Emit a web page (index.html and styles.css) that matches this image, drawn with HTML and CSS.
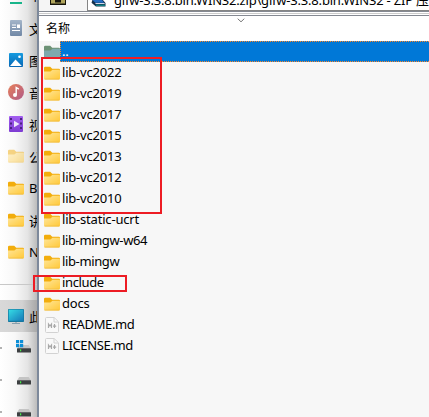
FILE: index.html
```
<!DOCTYPE html>
<html lang="zh-CN">
<head>
<meta charset="utf-8">
<title>Archive</title>
<link rel="stylesheet" href="styles.css">
</head>
<body>
<svg width="0" height="0" class="defs">
  <defs>
    <linearGradient id="gf" x1="0" y1="0" x2="1" y2="1"><stop offset="0" stop-color="#ffe69a"/><stop offset="1" stop-color="#ffc837"/></linearGradient>
    <linearGradient id="gm" x1="0" y1="0" x2="1" y2="1"><stop offset="0" stop-color="#35dce5"/><stop offset="1" stop-color="#1678b8"/></linearGradient>
    <linearGradient id="gp" x1="0" y1="0" x2="0" y2="1"><stop offset="0" stop-color="#159be0"/><stop offset="1" stop-color="#0867b4"/></linearGradient>
    <linearGradient id="ga" x1="0" y1="0" x2="1" y2="1"><stop offset="0" stop-color="#e7805a"/><stop offset="1" stop-color="#b05a88"/></linearGradient>
    <linearGradient id="gd" x1="0" y1="0" x2="0" y2="1"><stop offset="0" stop-color="#a4b5c9"/><stop offset="1" stop-color="#7188a6"/></linearGradient>
    <linearGradient id="gv" x1="0" y1="0" x2="0" y2="1"><stop offset="0" stop-color="#a35ff0"/><stop offset="1" stop-color="#7d3bd2"/></linearGradient>
    <symbol id="folder" viewBox="0 0 16 14"><path d="M0 2Q0 .8 1.2 .8H6.2L8.2 2.8H14.8Q16 2.8 16 4V8H0Z" fill="#f2ad0c"/><path d="M0 5.4H6.4L8.5 3.7H15Q16 3.7 16 4.7V12.3Q16 13.5 14.8 13.5H1.2Q0 13.5 0 12.3Z" fill="url(#gf)"/><path d="M.5 13.1H15.4" stroke="#edb83c" stroke-width=".7"/></symbol>
    <symbol id="folder-sel" viewBox="0 0 16 14"><path d="M0 2Q0 .8 1.2 .8H6.2L8.2 2.8H14.8Q16 2.8 16 4V8H0Z" fill="#6d9275"/><path d="M0 5.4H6.4L8.5 3.7H16V13.5H0Z" fill="#7eaaae"/></symbol>
    <symbol id="md" viewBox="0 0 14 16"><path d="M.5 1.5Q.5.5 1.5.5H9.2L13.5 4.8V14.5Q13.5 15.5 12.5 15.5H1.5Q.5 15.5.5 14.5Z" fill="#f9f9f9" stroke="#d2d2d2"/><path d="M9 .8V5H13.2" fill="none" stroke="#d2d2d2"/><path d="M3.5 11V7L5 9L6.5 7V11M9.5 7V11M8 9.2H11.2" fill="none" stroke="#a8a8a8" stroke-width="1.2"/></symbol>
    <symbol id="drive" viewBox="0 0 14 8"><path d="M2.3 0H11.7L14 3.5H0Z" fill="#c4c4c4"/><rect y="3.2" width="14" height="4.3" rx=".5" fill="#3c3f41"/><rect x="3" y="4.3" width="1.2" height="2" fill="#45ed4b"/></symbol>
  </defs>
</svg>
<div class="app">
  <aside class="side">
    <div class="nav"><svg class="i14" viewBox="0 0 14 16"><path d="M7 0V9M3 5L7 9L11 5" fill="none" stroke="#22b88c" stroke-width="2"/><rect x="1" y="14" width="12" height="2" fill="#18b58a"/></svg><span>下载</span></div>
    <div class="nav"><svg class="i14" viewBox="0 0 14 16"><rect x="1" width="12" height="16" rx="1" fill="url(#gd)"/><path d="M3 5H7M3 7.5H7M3 10.5H11" stroke="#fff" stroke-width="1.2"/><rect x="8" y="4.5" width="3" height="3.5" fill="#fff"/></svg><span>文档</span></div>
    <div class="nav"><svg class="i14" viewBox="0 0 14 14"><rect width="14" height="14" rx="1" fill="url(#gp)"/><path d="M1 13L6.5 6.5L12.8 13Z" fill="#fff"/><circle cx="10.5" cy="3.7" r="1.3" fill="#fff"/></svg><span>图片</span></div>
    <div class="nav"><svg class="i16" viewBox="0 0 16 16"><circle cx="8" cy="8" r="8" fill="url(#ga)"/><path d="M8.2 10.8V3.5L10.8 5.2" fill="none" stroke="#fff" stroke-width="1.4"/><circle cx="7" cy="11" r="2" fill="#fff"/></svg><span>音乐</span></div>
    <div class="nav"><svg class="i14" viewBox="0 0 14 16"><rect width="14" height="16" rx="1" fill="url(#gv)"/><path d="M2 2V15M12 2V15" stroke="#4b2380" stroke-width="2" stroke-dasharray="2 2.5"/><path d="M5 4.8L10.5 8L5 11.2Z" fill="#eee7fa"/></svg><span>视频</span></div>
    <div class="nav faded"><svg class="i16"><use href="#folder"/></svg><span>公用</span></div>
    <div class="nav"><svg class="i16"><use href="#folder"/></svg><span>BIN</span></div>
    <div class="nav"><svg class="i16"><use href="#folder"/></svg><span>讲义</span></div>
    <div class="nav"><svg class="i16"><use href="#folder"/></svg><span>Note</span></div>
    <div class="gap"></div>
    <div class="nav here"><svg class="i16" viewBox="0 0 16 16"><rect width="16" height="13" y="1" rx=".7" fill="#16779e"/><rect x=".7" y="1.6" width="14.6" height="11.2" fill="url(#gm)"/><path d="M8 14V15.5M4 15.5H12" stroke="#8aa0ad" stroke-width="1.2"/></svg><span>此电脑</span></div>
    <div class="nav disk"><i class="chev"></i><svg class="idisk" viewBox="0 0 15 14"><use href="#drive" x="1" y="5" width="14" height="8"/><path d="M0 0H3.2V3.2H0ZM4 0H7.2V3.2H4ZM0 4H3.2V7.2H0ZM4 4H7.2V7.2H4Z" fill="#0c8ed7"/></svg></div>
    <div class="nav disk"><i class="chev"></i><svg class="idisk" viewBox="0 0 15 14"><use href="#drive" x="1" y="5" width="14" height="8"/></svg></div>
    <div class="nav disk"><i class="chev"></i><svg class="idisk" viewBox="0 0 15 14"><use href="#drive" x="1" y="5" width="14" height="8"/></svg></div>
  </aside>
  <main class="main">
    <div class="bar">
      <i class="grip g1"></i>
      <svg class="up" viewBox="0 0 16 5"><path d="M0 0H16V5H0Z" fill="#16140a"/><path d="M1 0H15V3.5H1Z" fill="#b0a55c"/><path d="M5 0H11V2.5H5Z" fill="#16140a"/></svg>
      <i class="grip g2"></i>
      <div class="path">
        <svg class="books" viewBox="0 0 18 8"><path d="M2 0H14L17 3.5V7.5H6L1 3Z" fill="#15304b"/><path d="M2 0H13L15.5 3H5.5Z" fill="#236bc1"/><path d="M5.5 4H16" stroke="#eef" stroke-width="1"/><path d="M6 6H16.5" stroke="#108887" stroke-width="1.5"/></svg>
        <span class="addr">glfw-3.3.8.bin.WIN32.zip\glfw-3.3.8.bin.WIN32 - ZIP 压缩文件</span>
      </div>
    </div>
    <div class="rule"></div>
    <div class="head"><span>名称</span><svg class="sort" viewBox="0 0 8 5"><path d="M.7.7L4 3.8L7.3.7" fill="none" stroke="#777"/></svg></div>
    <div class="list">
      <div class="row sel"><svg class="i16"><use href="#folder-sel"/></svg><span>..</span></div>
      <div class="row"><svg class="i16"><use href="#folder"/></svg><span>lib-vc2022</span></div>
      <div class="row"><svg class="i16"><use href="#folder"/></svg><span>lib-vc2019</span></div>
      <div class="row"><svg class="i16"><use href="#folder"/></svg><span>lib-vc2017</span></div>
      <div class="row"><svg class="i16"><use href="#folder"/></svg><span>lib-vc2015</span></div>
      <div class="row"><svg class="i16"><use href="#folder"/></svg><span>lib-vc2013</span></div>
      <div class="row"><svg class="i16"><use href="#folder"/></svg><span>lib-vc2012</span></div>
      <div class="row"><svg class="i16"><use href="#folder"/></svg><span>lib-vc2010</span></div>
      <div class="row"><svg class="i16"><use href="#folder"/></svg><span>lib-static-ucrt</span></div>
      <div class="row tight"><svg class="i16"><use href="#folder"/></svg><span>lib-mingw-w64</span></div>
      <div class="row tight"><svg class="i16"><use href="#folder"/></svg><span>lib-mingw</span></div>
      <div class="row tight"><svg class="i16"><use href="#folder"/></svg><span>include</span></div>
      <div class="row"><svg class="i16"><use href="#folder"/></svg><span>docs</span></div>
      <div class="row tight"><svg class="i16"><use href="#md"/></svg><span>README.md</span></div>
      <div class="row tight"><svg class="i16"><use href="#md"/></svg><span>LICENSE.md</span></div>
    </div>
  </main>
  <div class="mark mark-libs"></div>
  <div class="mark mark-include"></div>
</div>
</body>
</html>
```
FILE: styles.css
```
* { box-sizing: border-box; }
body { margin: 0; overflow: hidden; font: 13px "Noto Sans", "Noto Sans CJK SC", sans-serif; color: #000; }
.defs { position: absolute; }
svg { display: block; flex: none; }
.app { position: relative; display: flex; width: 429px; height: 417px; overflow: hidden; }
.side { width: 37px; flex: none; overflow: hidden; background: linear-gradient(90deg, #fff 0, #f8f8f8 40%, #e4e4e4 75%, #bcbcbc 100%); }
.nav { display: flex; align-items: center; height: 32px; padding-left: 8px; gap: 5px; white-space: nowrap; }
.nav:first-child { height: 12px; align-items: flex-end; }
.nav:first-child svg { margin-bottom: 8px; }
.nav:first-child span { line-height: 18px; margin-bottom: 8px; }
.i14 { width: 14px; height: 16px; margin: 0 1px; }
.i16 { width: 16px; height: 16px; }
.faded svg { opacity: .5; }
.gap { height: 32px; padding-top: 16px; }
.gap::before { content: ""; display: block; height: 1px; background: #c8c8c8; }
.here { background: linear-gradient(90deg, #d9d9d9 0, #d2d2d2 60%, #a8a8a8 100%); }
.disk { padding-left: 0; gap: 14px; }
.disk svg { margin-top: -3px; }
.chev { width: 2px; height: 2px; background: #999; border-radius: 1px; }
.idisk { width: 15px; height: 14px; }
.main { flex: 1; min-width: 0; border-left: 2px solid #7d899b; background: #f7f7f7; }
.bar { height: 11px; display: flex; background: #f5f5f5; overflow: hidden; }
.grip { width: 2px; height: 11px; background: repeating-linear-gradient(#b5b5b5 0 2px, #f5f5f5 2px 4px); }
.g1 { margin-left: 3px; }
.up { width: 16px; height: 5px; margin-left: 8px; }
.g2 { margin-left: 16px; }
.path { flex: 1; display: flex; margin-left: 5px; height: 11px; background: #fff; border: solid #858585; border-width: 0 0 1px 1px; white-space: nowrap; }
.books { width: 17px; height: 7px; margin-left: 2px; }
.addr { line-height: 18px; margin: -9px 0 0 7px; letter-spacing: -.2px; }
.rule { height: 5px; border: solid #858992; border-width: 1px 0; background: linear-gradient(#fff 0 33%, #ccc 33% 66%, #fff 66%); }
.head { position: relative; height: 25px; padding-left: 7px; background: #fff; line-height: 25px; font-size: 12px; }
.sort { position: absolute; left: 198px; top: 2px; width: 8px; height: 5px; }
.row { display: flex; align-items: center; height: 21px; padding-left: 5px; }
.row span { padding-left: 2px; line-height: 21px; letter-spacing: -.2px; white-space: nowrap; }
.row.tight span { letter-spacing: -.37px; }
.sel span { flex: 1; height: 21px; line-height: 19px; background: #0078d7; color: #fff; border: 1px dotted #ff8728; border-right: 0; padding-left: 1px; }
.mark { position: absolute; border: 2px solid #ed1c24; }
.mark-libs { left: 41px; top: 57px; width: 121px; height: 157px; }
.mark-include { left: 33px; top: 275px; width: 94px; height: 17px; }
```
